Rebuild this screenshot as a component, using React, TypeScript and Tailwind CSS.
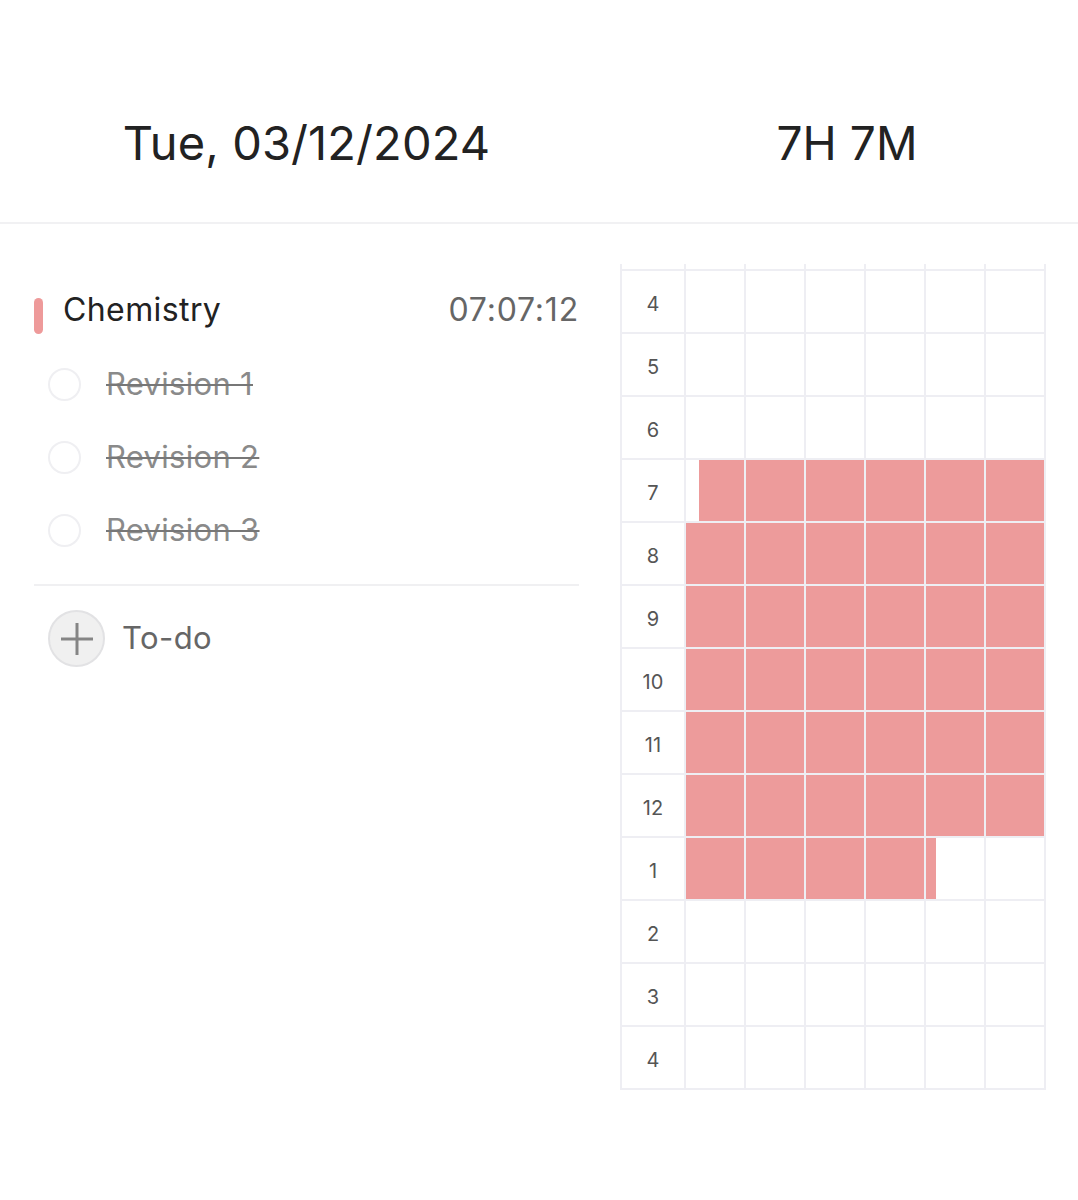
const todos = ['Revision 1', 'Revision 2', 'Revision 3'];

const hours = [4, 5, 6, 7, 8, 9, 10, 11, 12, 1, 2, 3, 4];

// filled span per row: [from, to] measured in columns (0..6)
const fills: Record<number, [number, number]> = {
  3: [0.22, 6],
  4: [0, 6],
  5: [0, 6],
  6: [0, 6],
  7: [0, 6],
  8: [0, 6],
  9: [0, 4.17],
};

function Cell({ row, col }: { row: number; col: number }) {
  const span = fills[row];
  let fill = 0;
  let alignEnd = false;
  if (span) {
    const [from, to] = span;
    if (col + 1 <= from || col >= to) fill = 0;
    else if (col < from) {
      fill = col + 1 - from;
      alignEnd = true;
    } else if (col + 1 > to) fill = to - col;
    else fill = 1;
  }
  return (
    <div className={alignEnd ? 'flex justify-end bg-white' : 'flex bg-white'}>
      {fill > 0 && <div className="h-full bg-[#ed9b9b]" style={{ width: `${fill * 100}%` }} />}
    </div>
  );
}

export default function App() {
  return (
    <div className="w-[1078px] h-[1200px] bg-white font-['Inter',sans-serif] text-[#222]">
      {/* Header */}
      <header className="flex h-[224px] items-center border-b-2 border-[#f1f1f3] pt-[64px]">
        <div className="ml-[34px] w-[545px] shrink-0 text-center text-[47px] tracking-[0.1px]">Tue, 03/12/2024</div>
        <div className="ml-[41px] mr-[4px] flex-1 text-center text-[46px] tracking-[0.1px]">7H 7M</div>
      </header>

      <div className="flex pl-[34px]">
        {/* Tasks */}
        <div className="w-[545px] shrink-0 pt-[74px]">
          <div className="flex h-9 items-center">
            <div className="h-9 w-[9px] rounded-full bg-[#ee9a9a]" />
            <div className="ml-[20px] flex-1 pb-[12px] text-[32px] tracking-[0.4px] text-[#222]">Chemistry</div>
            <div className="pb-[12px] text-[32px] tracking-[0.8px] text-[#666]">07:07:12</div>
          </div>
          <div className="mt-[14px]">
            {todos.map((t) => (
              <div key={t} className="flex h-[73px] items-center">
                <div className="ml-[14px] h-[33px] w-[33px] rounded-full border-2 border-[#efeff2]" />
                <div className="ml-[25px] text-[31px] tracking-[0.3px] text-[#8a8a8a] line-through decoration-[#777] decoration-2">
                  {t}
                </div>
              </div>
            ))}
          </div>
          <div className="mt-[17px] h-[2px] bg-[#f0f0f2]" />
          <div className="mt-[24px] flex items-center">
            <div className="ml-[14px] flex h-[57px] w-[57px] items-center justify-center rounded-full border-2 border-[#e2e2e4] bg-[#f0f0f0]">
              <svg width="32" height="32" viewBox="0 0 32 32" fill="none" stroke="#858585" strokeWidth="3">
                <path d="M16 0v32M0 16h32" />
              </svg>
            </div>
            <div className="ml-[17px] text-[31px] tracking-[0.4px] text-[#666]">To-do</div>
          </div>
        </div>

        {/* Timeline grid */}
        <div className="ml-[41px] shrink-0 pt-[40px]">
          <div className="grid w-[426px] grid-cols-[62px_repeat(6,58px)] grid-rows-[5px_repeat(13,61px)] gap-[2px] bg-[#eeeef3] px-[2px] pb-[2px]">
            {Array.from({ length: 7 }).map((_, c) => (
              <div key={`top-${c}`} className="bg-white" />
            ))}
            {hours.map((h, r) => (
              <>
                <div key={`l-${r}`} className="flex items-center justify-center bg-white pt-[4px] text-[20px] text-[#555]">
                  {h}
                </div>
                {Array.from({ length: 6 }).map((_, c) => (
                  <Cell key={`c-${r}-${c}`} row={r} col={c} />
                ))}
              </>
            ))}
          </div>
        </div>
      </div>
    </div>
  );
}
